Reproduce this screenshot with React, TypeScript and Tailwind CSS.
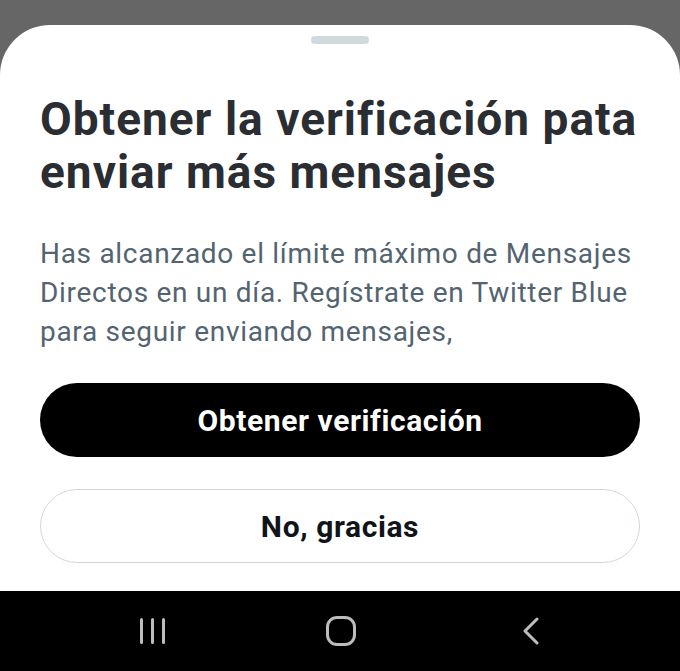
import React from 'react';

const NavBar: React.FC = () => (
    <div className="h-[80px] bg-black flex items-center">
        {/* Recents */}
        <div className="w-[300px] flex justify-end pr-[135px]">
            <div className="flex gap-[8px]">
                <span className="w-[3px] h-[26px] rounded-full bg-[#bdbdbd]" />
                <span className="w-[3px] h-[26px] rounded-full bg-[#bdbdbd]" />
                <span className="w-[3px] h-[26px] rounded-full bg-[#bdbdbd]" />
            </div>
        </div>
        {/* Home */}
        <div className="w-[30px] h-[30px] ml-[26px] rounded-[11px] border-[3px] border-[#bdbdbd]" />
        {/* Back */}
        <svg className="ml-[166px]" width="18" height="28" viewBox="0 0 18 28" fill="none">
            <path d="M15 2 L3 14 L15 26" stroke="#bdbdbd" strokeWidth="3" strokeLinecap="round" strokeLinejoin="round" />
        </svg>
    </div>
);

export default function App() {
    return (
        <div className="w-[680px] h-[671px] bg-[#666666] flex flex-col overflow-hidden font-['Roboto',sans-serif]">
            <div className="h-[25px] shrink-0" />

            <div className="flex-1 bg-white rounded-t-[50px] flex flex-col px-[40px]">
                {/* Grabber */}
                <div className="flex justify-center pt-[11px]">
                    <div className="w-[58px] h-[8px] rounded-full bg-[#cfd9de]" />
                </div>

                <h1 className="mt-[49px] text-[46px] leading-[53px] font-bold text-[#2a2d32] tracking-[1px]">
                    Obtener la verificación pata enviar más mensajes
                </h1>

                <p className="mt-[35px] text-[28px] leading-[39px] text-[#536471] tracking-[0.7px]">
                    Has alcanzado el límite máximo de Mensajes Directos en un día. Regístrate en Twitter Blue para seguir enviando mensajes,
                </p>

                <button className="mt-[32px] h-[74px] w-full shrink-0 rounded-full bg-black text-white text-[30px] font-bold tracking-[0.6px]">
                    Obtener verificación
                </button>

                <button className="mt-[32px] h-[74px] w-full shrink-0 rounded-full border-[1.5px] border-[#cfd9de] bg-white text-[#0f1419] text-[30px] font-bold tracking-[0.6px]">
                    No, gracias
                </button>
            </div>

            <NavBar />
        </div>
    );
}
